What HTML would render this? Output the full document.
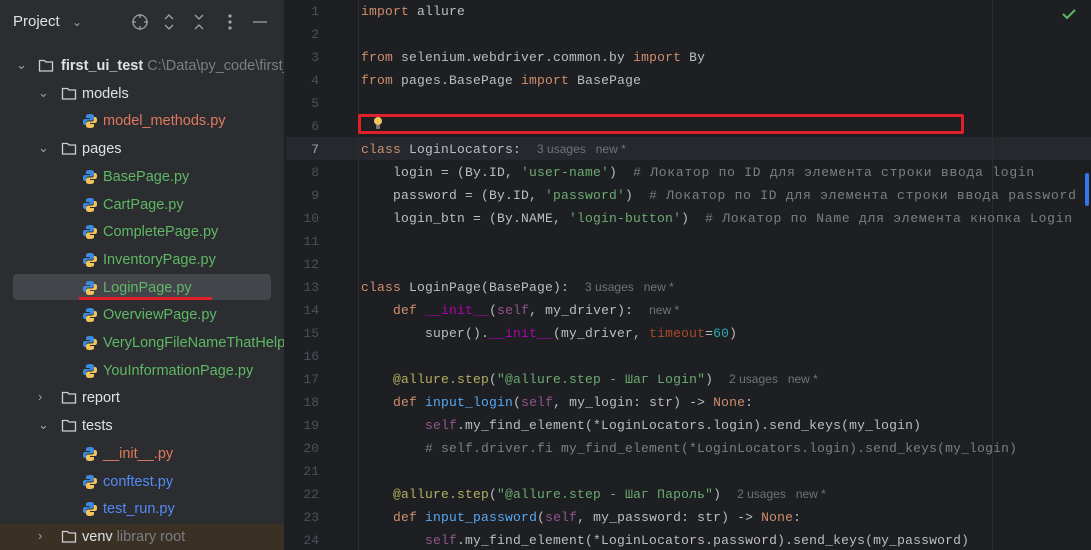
<!DOCTYPE html><html><head><meta charset="utf-8"><style>
*{margin:0;padding:0;box-sizing:border-box}
html,body{width:1091px;height:550px;overflow:hidden}
body{background:#1e1f22;font-family:"Liberation Sans",sans-serif;position:relative}
#side{position:absolute;left:0;top:0;width:285px;height:550px;background:#2b2d30;border-right:1px solid #1e1f22;overflow:hidden}
.row{position:absolute;left:0;width:285px;height:26px;color:#dfe1e5;font-size:14.5px;line-height:26px;white-space:nowrap}
.row span{position:absolute}
.chev{color:#9da0a8;font-size:12px}
.py{position:absolute;width:16px;height:16px;top:5px}
#ed{position:absolute;left:286px;top:0;right:0;height:550px;font-family:"Liberation Mono","DejaVu Sans Mono",monospace;font-size:13px;overflow:hidden}
.l{position:absolute;left:0;right:0;height:23px;line-height:23px;white-space:pre;color:#bcbec4}
.n{position:absolute;width:33px;text-align:right;color:#4b5059;left:0}
.c{position:absolute;left:75px;letter-spacing:0.2px}
.k{color:#cf8e6d}.s{color:#6aab73}.m{color:#7a7e85}.cy{letter-spacing:0.75px}.sf{color:#94558d}.d{color:#b200b2}.nu{color:#2aacb8}.pa{color:#aa4926}.dec{color:#b3ae60}.f{color:#56a8f5}
.h{font-family:"Liberation Sans",sans-serif;font-size:12px;color:#6f737a;letter-spacing:0}
</style></head><body>
<div id="side">
 <div class="row" style="top:9px"><span style="left:13px;font-size:15px">Project</span><span class="chev" style="left:72px">&#8964;</span></div>
 <svg style="position:absolute;left:131px;top:13px" width="150" height="18" fill="none" stroke="#9da0a8" stroke-width="1.3">
  <circle cx="9" cy="9" r="7"/><path d="M9 1v4M9 13v4M1 9h4M13 9h4"/>
  <path d="M34 6l4-4 4 4M34 12l4 4 4-4"/>
  <path d="M64 2l4 4 4-4M64 16l4-4 4 4"/>
  <circle cx="99" cy="3" r="1" fill="#9da0a8"/><circle cx="99" cy="9" r="1" fill="#9da0a8"/><circle cx="99" cy="15" r="1" fill="#9da0a8"/>
  <path d="M122 9h14"/>
 </svg>
 <div style="position:absolute;left:13px;top:274px;width:258px;height:26px;background:#43454a;border-radius:4px"></div>
 <div style="position:absolute;left:0;top:524px;width:285px;height:26px;background:#3a3024"></div>
 <div id="tree"></div>
 <div style="position:absolute;left:79px;top:297px;width:133px;height:3px;background:#e0202a"></div>
</div>
<div id="ed">
 <div style="position:absolute;left:0;right:0;top:137px;height:23px;background:#26282e"></div>
 <div style="position:absolute;left:72px;top:0;width:1px;height:550px;background:#2b2d30"></div>
 <div style="position:absolute;left:706px;top:0;width:1px;height:550px;background:#2b2d30"></div>
 <div style="position:absolute;left:799px;top:173px;width:4px;height:33px;background:#3574f0;border-radius:2px"></div>
 <svg style="position:absolute;left:776px;top:8px" width="14" height="12"><path d="M1 6l4 4 8-8" stroke="#5fb865" stroke-width="2" fill="none"/></svg>
 <div id="code"></div>
 <div style="position:absolute;left:72px;top:114px;width:606px;height:20px;border:3px solid #e0202a;border-radius:2px"></div>
 <svg style="position:absolute;left:86px;top:116px" width="12" height="14"><circle cx="6" cy="5" r="4" fill="#f2c55c"/><path d="M4 10h4M4 12h4" stroke="#ccc" stroke-width="1"/></svg>
</div>
<script>
const py='<svg class="py" viewBox="0 0 16 16"><path d="M8 1C4 1 4 2.5 4 3.5V5h4v1H3C1 6 1 8 1 9s0 3 2 3h1v-2c0-1.5 1-2.5 2.5-2.5h3C11 7.5 12 6.5 12 5V3.5C12 2 11 1 8 1z" fill="#3d8be0"/><path d="M8 15c4 0 4-1.5 4-2.5V11H8v-1h5c2 0 2-2 2-3s0-3-2-3h-1v2c0 1.5-1 2.5-2.5 2.5h-3C5 8.5 4 9.5 4 11v1.5C4 14 5 15 8 15z" fill="#f2c55c"/></svg>';
const fold='<svg style="position:absolute;top:5px" width="16" height="15" viewBox="0 0 16 15"><path d="M1.5 2.5h5l1.5 1.5h6.5v9h-13z" fill="none" stroke="#ced0d6" stroke-width="1.3"/></svg>';
const T=[[0,'v','first_ui_test','#dfe1e5',' C:\\Data\\py_code\\first_ui_test',1],[1,'v','models'],[2,'','model_methods.py','#e07a5f'],[1,'v','pages'],[2,'','BasePage.py','#5fb865'],[2,'','CartPage.py','#5fb865'],[2,'','CompletePage.py','#5fb865'],[2,'','InventoryPage.py','#5fb865'],[2,'','LoginPage.py','#5fb865'],[2,'','OverviewPage.py','#5fb865'],[2,'','VeryLongFileNameThatHelps.py','#5fb865'],[2,'','YouInformationPage.py','#5fb865'],[1,'>','report'],[1,'v','tests'],[2,'','__init__.py','#e07a5f'],[2,'','conftest.py','#548af7'],[2,'','test_run.py','#548af7'],[1,'>','venv','#dfe1e5',' library root']];
let h='';T.forEach((t,i)=>{const y=53+i*27.7;let lv=t[0];let s='<div class="row" style="top:'+y+'px">';
if(lv<2){const cx=lv==0?16:38,fx=lv==0?38:61,tx=lv==0?61:82;s+='<span class="chev" style="left:'+cx+'px;top:-1px;font-size:13px">'+(t[1]=='v'?'&#8964;':'&#8250;')+'</span>';s+=fold.replace('position:absolute;','position:absolute;left:'+fx+'px;');s+='<span style="left:'+tx+'px;'+(t[5]?'font-weight:bold;':'')+'color:'+(t[3]||'#dfe1e5')+'">'+t[2]+(t[4]?'<span style="position:static;color:#7a7e85;font-weight:normal">'+t[4]+'</span>':'')+'</span>';}
else{s+=py.replace('class="py"','class="py" style="left:82px"');s+='<span style="left:103px;color:'+t[3]+'">'+t[2]+'</span>';}
h+=s+'</div>';});document.getElementById('tree').innerHTML=h;
const L=[
'<span class="k">import</span> allure','',
'<span class="k">from</span> selenium.webdriver.common.by <span class="k">import</span> By',
'<span class="k">from</span> pages.BasePage <span class="k">import</span> BasePage','','',
'<span class="k">class</span> LoginLocators:  <span class="h">3 usages   new *</span>',
'    login = (By.ID, <span class="s">\'user-name\'</span>)  <span class="m cy"># Локатор по ID для элемента строки ввода login</span>',
'    password = (By.ID, <span class="s">\'password\'</span>)  <span class="m cy"># Локатор по ID для элемента строки ввода password</span>',
'    login_btn = (By.NAME, <span class="s">\'login-button\'</span>)  <span class="m cy"># Локатор по Name для элемента кнопка Login</span>','','',
'<span class="k">class</span> LoginPage(BasePage):  <span class="h">3 usages   new *</span>',
'    <span class="k">def</span> <span class="d">__init__</span>(<span class="sf">self</span>, my_driver):  <span class="h">new *</span>',
'        super().<span class="d">__init__</span>(my_driver, <span class="pa">timeout</span>=<span class="nu">60</span>)','',
'    <span class="dec">@allure.step</span>(<span class="s">"@allure.step - Шаг Login"</span>)  <span class="h">2 usages   new *</span>',
'    <span class="k">def</span> <span class="f">input_login</span>(<span class="sf">self</span>, my_login: str) -> <span class="k">None</span>:',
'        <span class="sf">self</span>.my_find_element(*LoginLocators.login).send_keys(my_login)',
'        <span class="m"># self.driver.fi my_find_element(*LoginLocators.login).send_keys(my_login)</span>','',
'    <span class="dec">@allure.step</span>(<span class="s">"@allure.step - Шаг Пароль"</span>)  <span class="h">2 usages   new *</span>',
'    <span class="k">def</span> <span class="f">input_password</span>(<span class="sf">self</span>, my_password: str) -> <span class="k">None</span>:',
'        <span class="sf">self</span>.my_find_element(*LoginLocators.password).send_keys(my_password)'];
let c='';L.forEach((t,i)=>{c+='<div class="l" style="top:'+(i*23)+'px"><span class="n" style="'+(i==6?'color:#a1a3ab':'')+'">'+(i+1)+'</span><span class="c">'+t+'</span></div>';});
document.getElementById('code').innerHTML=c;
</script></body></html>
